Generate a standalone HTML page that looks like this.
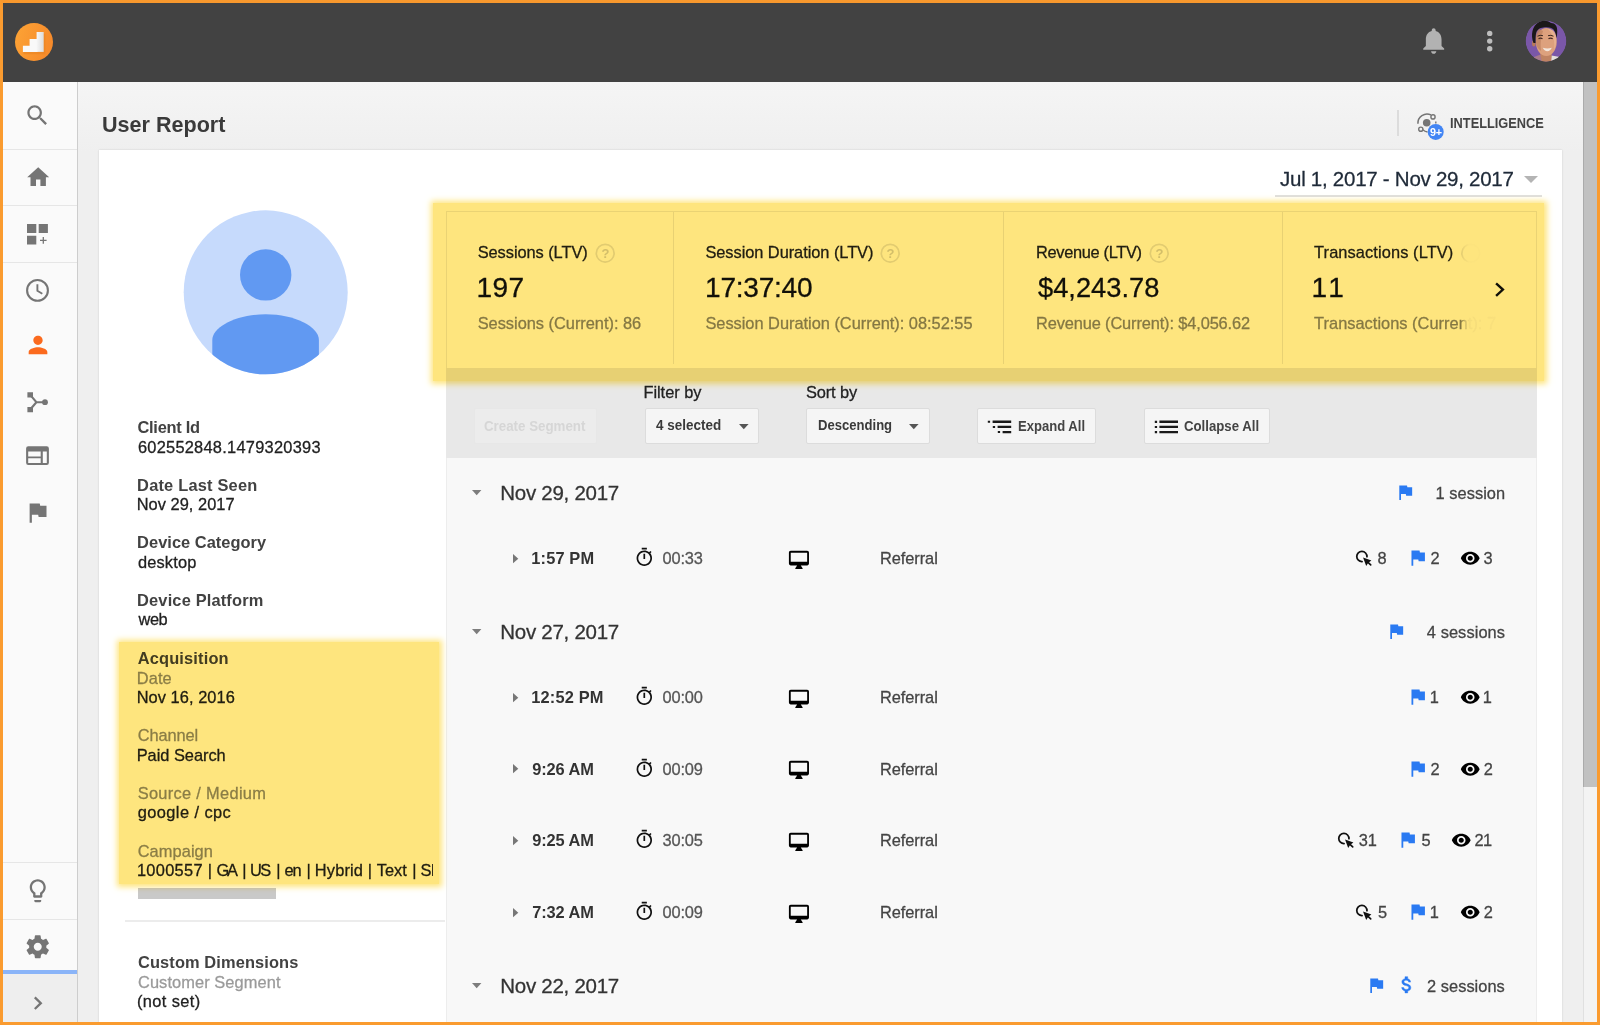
<!DOCTYPE html>
<html>
<head>
<meta charset="utf-8">
<title>User Report</title>
<style>
*{box-sizing:border-box;margin:0;padding:0}
html,body{width:1600px;height:1025px;overflow:hidden;background:#f1f1f1;font-family:"Liberation Sans",sans-serif;color:#212121}
#app{position:absolute;left:0;top:0;width:1600px;height:1025px;overflow:hidden}
#frame{position:absolute;left:0;top:0;width:1600px;height:1025px;border:3px solid #fa9b2f;border-top-color:#f8982d;z-index:50}
.a{position:absolute}
.t{position:absolute;white-space:nowrap;line-height:1;height:1em}
.t{-webkit-text-stroke:.28px}
.b{font-weight:bold;-webkit-text-stroke:0}
svg{position:absolute;overflow:visible}
#topbar{left:0;top:0;width:1600px;height:82px;background:#424242}
#side{left:0;top:82px;width:78px;height:943px;background:#fafafa;border-right:1px solid #cdcdcd}
.ln{position:absolute;left:0;width:77px;height:1px;background:#e6e6e6}
#main{left:78px;top:82px;width:1505px;height:943px;background:linear-gradient(#f5f5f5,#efefef 70px,#efefef)}
#card{left:99px;top:150px;width:1463px;height:880px;background:#fff;box-shadow:0 0 2px rgba(0,0,0,.14)}
#sbtrack{left:1583px;top:82px;width:14px;height:943px;background:#f3f3f3;border-left:1px solid #e0e0e0}
#sbthumb{left:1583px;top:82px;width:14px;height:705px;background:#c1c1c1;border-left:1px solid #ababab}
#stats{left:446px;top:211px;width:1091px;height:157px;background:#fff;border:1px solid #ebebeb;border-bottom:none}
.vd{position:absolute;top:212px;width:1px;height:152px;background:#e9e9e9}
#tool{left:446px;top:368px;width:1091px;height:90px;background:#e8e8e8}
#tl{left:446px;top:458px;width:1091px;height:580px;background:#f8f8f8;border-left:1px solid #ededed;border-right:1px solid #ededed}
.btn{position:absolute;top:408px;height:36px;background:#f5f5f5;border:1px solid #dcdcdc;border-radius:2px}
.hl{position:absolute;background:#fee57e;mix-blend-mode:multiply;box-shadow:0 0 6px 2.5px #fee57e;z-index:20}
</style>
</head>
<body>
<div id="app">
<div id="main" class="a"></div>
<div id="card" class="a"></div>
<div id="side" class="a">
<div class="ln" style="top:67px"></div>
<div class="ln" style="top:123px"></div>
<div class="ln" style="top:180px"></div>
<div class="ln" style="top:780px"></div>
<div class="ln" style="top:837px"></div>
<div class="a" style="left:0;top:891px;width:77px;height:52px;background:#eee"></div>
<div class="a" style="left:0;top:888px;width:77px;height:4px;background:#8ab4f8"></div>
</div>
<div id="topbar" class="a"></div>
<div id="sbtrack" class="a"></div>
<div id="sbthumb" class="a"></div>
<!-- header -->
<div class="a" style="left:1397px;top:110px;width:2px;height:26px;background:#dcdcdc"></div>
<div class="a" style="left:1275px;top:195px;width:267px;height:1.5px;background:#e0e0e0"></div>
<!-- left panel -->
<div class="a" style="left:125px;top:920px;width:320px;height:2px;background:#ececec"></div>
<div class="a" style="left:138px;top:888px;width:138px;height:11px;background:#c9c9c9"></div>
<!-- stats / toolbar / timeline -->
<div id="tl" class="a"></div>
<div id="tool" class="a"></div>
<div id="stats" class="a"></div>
<div class="vd" style="left:673px"></div>
<div class="vd" style="left:1003px"></div>
<div class="vd" style="left:1282px"></div>
<div class="btn" style="left:473.5px;width:123px;background:#ececec;border-color:#e7e7e7"></div>
<div class="btn" style="left:644.5px;width:114px"></div>
<div class="btn" style="left:806px;width:124px"></div>
<div class="btn" style="left:977px;width:119px"></div>
<div class="btn" style="left:1144px;width:125.5px"></div>
<svg width="0" height="0" style="left:0;top:0"><defs>
<linearGradient id="gaG" x1="0" y1="0" x2="1" y2="0.3"><stop offset="0" stop-color="#fda436"/><stop offset="1" stop-color="#f68b2b"/></linearGradient>
<linearGradient id="gaS" x1="0" y1="0" x2="1" y2="0"><stop offset="0" stop-color="#f7f7f7"/><stop offset="1" stop-color="#dcdcdc"/></linearGradient>
<clipPath id="avc"><circle cx="0" cy="0" r="20.4"/></clipPath>
<clipPath id="usc"><circle cx="265.7" cy="292.3" r="82"/></clipPath>
</defs></svg>
<!-- GA logo -->
<svg class="a" style="left:15px;top:23.2px" width="38" height="38" viewBox="0 0 38 38"><circle cx="19" cy="19" r="19" fill="url(#gaG)"/><path d="M7.9 30.3v-6.7h6.7v-6.7h8v-7.1h7.1v20.5z" fill="#e88423" opacity=".55" transform="translate(.6 .9)"/><path d="M7.9 28.9v-6.1h6.7v-6.7h8v12.8z" fill="#f9f9f9"/><path d="M21.6 28.9V9.0h7.1v19.9z" fill="url(#gaS)"/></svg>
<!-- bell -->
<svg class="a" style="left:1417.6px;top:25.1px" width="31.4" height="31.4" viewBox="0 0 24 24"><path fill="#b2b2b2" d="M12 22c1.1 0 2-.9 2-2h-4c0 1.1.89 2 2 2zm6-6v-5c0-3.07-1.64-5.64-4.5-6.32V4c0-.83-.67-1.5-1.5-1.5s-1.5.67-1.5 1.5v.68C7.63 5.36 6 7.92 6 11v5l-2 2v1h16v-1l-2-2z"/></svg>
<!-- dots -->
<svg class="a" style="left:1480px;top:25px" width="20" height="32"><circle cx="9.7" cy="8.4" r="2.7" fill="#bdbdbd"/><circle cx="9.7" cy="16.1" r="2.7" fill="#bdbdbd"/><circle cx="9.7" cy="23.8" r="2.7" fill="#bdbdbd"/></svg>
<!-- avatar -->
<svg class="a" style="left:1546.1px;top:41.3px" width="1" height="1"><g clip-path="url(#avc)"><circle r="20.4" fill="#7a57a8"/><path d="M-14 21l2-5 8-3h9l3 8z" fill="#a87a8c"/><path d="M5.500 14.500l8.500 1.500-2 6h-7z" fill="#e3e1dc"/><path d="M-6.500 9h12.500l-1 12.500h-9z" fill="#c08362"/><ellipse cx="0.300" cy="1" rx="10.400" ry="14" fill="#dda17d"/><path d="M-10 2c-1-6 0-11 3-14l4 2c-2 6-3 12-2 20-3-2-4.500-5-5-8z" fill="#c18463" opacity=".8"/><path d="M2-12c4 0 7 2 8 6 1 5 0 11-2 15 1-8 0-15-6-21z" fill="#ecb896" opacity=".7"/><ellipse cx="-12.200" cy="2.500" rx="1.800" ry="3" fill="#b87a58"/><path d="M-12.500 2C-15.500-6-14-15-7-19c4-2 9-1.500 12 1 4 0 6.500 3 6.200 8 0 2.500-.2 5-.7 7-.5-3-1-6-3-8.500-2-2-6-2.500-10-2-4 .5-6.500 2-7.500 6-.5 3-.5 6-.5 9.500z" fill="#1b1819"/><path d="M-3.200 6.800q4.500 1.400 9 0q-1.500 3.400-4.500 3.400t-4.500-3.400z" fill="#f3e6dc"/><path d="M-7.500-2.300q2-1.200 4 0M2.500-2.300q2-1.200 4.200 0" stroke="#4a2e26" stroke-width="1.300" fill="none"/><path d="M-8.500-4.800q2.500-1.500 5.500-.5M2-5.300q3-1 5.500.5" stroke="#2a1c1a" stroke-width=".9" fill="none"/></g></svg>
<!-- sidebar: search -->
<svg class="a" style="left:23.6px;top:101.8px" width="26.9" height="26.9" viewBox="0 0 24 24"><path fill="#757575" d="M15.5 14h-.79l-.28-.27C15.41 12.59 16 11.11 16 9.500 16 5.910 13.090 3 9.500 3S3 5.910 3 9.500 5.910 16 9.500 16c1.610 0 3.090-.59 4.230-1.570l.27.28v.79l5 4.990L20.490 19l-4.990-5zm-6 0C7.010 14 5 11.990 5 9.500S7.010 5 9.500 5 14 7.010 14 9.500 11.990 14 9.500 14z"/></svg>
<!-- home -->
<svg class="a" style="left:24.5px;top:163.6px" width="26.4" height="26.4" viewBox="0 0 24 24"><path fill="#757575" d="M10 20v-6h4v6h5v-8h3L12 3 2 12h3v8z"/></svg>
<!-- dashboards -->
<svg class="a" style="left:27.4px;top:224.4px" width="21" height="21"><path fill="#757575" d="M0 0h9.300v8.900H0zM11.700 0h9.200v8.900h-9.200zM0 11.700h9.300v8.900H0z"/><path d="M13 16.400h6.600M16.300 13.100v6.600" stroke="#757575" stroke-width="1.300" fill="none"/></svg>
<!-- clock -->
<svg class="a" style="left:24px;top:277px" width="27" height="27"><circle cx="13.500" cy="13.400" r="10.400" fill="none" stroke="#757575" stroke-width="2.100"/><path d="M13.400 7.300v6.500l4.900 2.900" fill="none" stroke="#757575" stroke-width="1.900"/></svg>
<!-- person (active) -->
<svg class="a" style="left:23.500px;top:331.400px" width="28" height="28" viewBox="0 0 24 24"><path fill="#fb6a1e" d="M12 12c2.210 0 4-1.790 4-4s-1.790-4-4-4-4 1.790-4 4 1.790 4 4 4zm0 2c-2.670 0-8 1.340-8 4v2h16v-2c0-2.660-5.330-4-8-4z"/></svg>
<!-- merge / flow -->
<svg class="a" style="left:26px;top:390px" width="24" height="24"><path d="M4.200 4.900L10.400 12.200H17M4.200 19.500L10.400 12.200" fill="none" stroke="#757575" stroke-width="2.100"/><path fill="#757575" d="M1.400 2.300h5.600v5.300H1.400zM1.400 16.900h5.600v5.300H1.400z"/><circle cx="19" cy="12.200" r="2.900" fill="#757575"/></svg>
<!-- table -->
<svg class="a" style="left:26px;top:446px" width="24" height="20"><path fill="#757575" fill-rule="evenodd" d="M2.300.3h18.400a2.200 2.200 0 0 1 2.200 2.200v14.200a2.200 2.200 0 0 1-2.200 2.200H2.300A2.200 2.200 0 0 1 .1 16.700V2.500A2.200 2.200 0 0 1 2.300.3zM2.200 5.600v4.800h12.500V5.600zM2.200 12.300v4.600h12.500v-4.600zM16.800 5.600v11.300h4V5.600z"/></svg>
<!-- flag -->
<svg class="a" style="left:24.200px;top:498.500px" width="27" height="27" viewBox="0 0 24 24" fill="#757575"><path d="M14.4 6L14 4H5v17h2v-7h5.6l.4 2h7V6z"/></svg>
<!-- bulb -->
<svg class="a" style="left:24px;top:877px" width="27.500" height="27.500" viewBox="0 0 24 24"><path fill="#757575" d="M9 21c0 .55.450 1 1 1h4c.55 0 1-.45 1-1v-1H9v1zm3-19C8.140 2 5 5.140 5 9c0 2.380 1.190 4.470 3 5.740V17c0 .55.450 1 1 1h6c.55 0 1-.45 1-1v-2.260c1.810-1.270 3-3.360 3-5.740 0-3.860-3.140-7-7-7zm2.850 11.100l-.85.6V16h-4v-2.300l-.85-.6C7.800 12.160 7 10.630 7 9c0-2.760 2.240-5 5-5s5 2.240 5 5c0 1.630-.8 3.160-2.150 4.100z"/></svg>
<!-- gear -->
<svg class="a" style="left:23.900px;top:933.200px" width="27.500" height="27.500" viewBox="0 0 24 24"><path fill="#757575" d="M19.430 12.980c.04-.32.070-.64.070-.98s-.03-.66-.07-.98l2.110-1.650c.19-.15.240-.42.120-.64l-2-3.460c-.12-.22-.39-.3-.61-.22l-2.490 1c-.52-.4-1.080-.73-1.690-.98l-.38-2.650C14.460 2.180 14.250 2 14 2h-4c-.25 0-.46.180-.49.420l-.38 2.650c-.61.250-1.170.59-1.690.98l-2.490-1c-.23-.09-.49 0-.61.220l-2 3.460c-.13.220-.07.490.12.640l2.110 1.650c-.04.320-.07.650-.07.980s.03.660.07.980l-2.110 1.650c-.19.150-.24.420-.12.640l2 3.460c.12.220.39.300.61.220l2.490-1c.52.400 1.080.73 1.690.98l.38 2.650c.03.240.24.420.49.420h4c.25 0 .46-.18.490-.42l.38-2.650c.61-.25 1.170-.59 1.690-.98l2.490 1c.23.090.49 0 .61-.22l2-3.460c.12-.22.070-.49-.12-.64l-2.110-1.650zM12 15.500c-1.930 0-3.500-1.570-3.500-3.500s1.570-3.500 3.500-3.500 3.500 1.570 3.500 3.500-1.570 3.500-3.500 3.500z"/></svg>
<!-- sidebar chevron -->
<svg class="a" style="left:30px;top:994px" width="16" height="18"><path d="M4.800 3.400L10.800 9.200 4.800 15" fill="none" stroke="#757575" stroke-width="2.300"/></svg>
<!-- user avatar big -->
<svg class="a" style="left:0;top:0" width="1" height="1"><circle cx="265.700" cy="292.300" r="82" fill="#c6dafc"/><circle cx="265.700" cy="274.900" r="25.700" fill="#6199f2"/><g clip-path="url(#usc)"><path d="M212.300 380V340c0-13 24-25.700 53.400-25.700s53.200 12.700 53.200 25.700v40z" fill="#6199f2"/></g></svg>
<!-- intelligence icon -->
<svg class="a" style="left:1414px;top:110px" width="32" height="32"><circle cx="12.700" cy="12.800" r="3.800" fill="#757575"/><path d="M3.900 13.800A9.200 9.200 0 0 1 17 4.900M8.800 19.700A9.200 9.200 0 0 0 13.500 22" fill="none" stroke="#757575" stroke-width="1.500"/><circle cx="19" cy="6.900" r="2.100" fill="#f1f1f1" stroke="#757575" stroke-width="1.400"/><circle cx="6.800" cy="19.200" r="2.100" fill="#f1f1f1" stroke="#757575" stroke-width="1.400"/><path d="M21.800 11.500v2" stroke="#757575" stroke-width="1.400"/><circle cx="21.700" cy="21.900" r="8" fill="#4285f4"/></svg>
<div class="t b" style="left:1429.900px;top:126.600px;font-size:10.800px;color:#fff;letter-spacing:-.2px">9+</div>
<!-- date caret -->
<svg class="a" style="left:1524.400px;top:176px" width="14" height="7"><path d="M0 0h14l-7 7z" fill="#b4b4b4"/></svg>
<!-- dropdown carets -->
<svg class="a" style="left:738.600px;top:424.300px" width="10" height="6"><path d="M0 0h9.600l-4.800 5.300z" fill="#555"/></svg>
<svg class="a" style="left:909px;top:424.300px" width="10" height="6"><path d="M0 0h9.600l-4.800 5.300z" fill="#555"/></svg>
<!-- expand all icon -->
<svg class="a" style="left:987px;top:420px" width="26" height="15"><path fill="#1a1a1a" d="M.8 .8h2.300v2H.8zM5.600 .6h18.600v2.300H5.600zM5.800 5.900h2.300v2H5.800zM10.600 5.700h13.600v2.300H10.600zM10.800 11.100h2.300v2h-2.300zM15.600 10.900h8.600v2.300h-8.600z"/></svg>
<!-- collapse all icon -->
<svg class="a" style="left:1154px;top:420px" width="26" height="15"><path fill="#1a1a1a" d="M.8 .8h2.300v2.100H.8zM5.400 .6h18.600v2.400H5.400zM.8 5.900h2.300v2.100H.8zM5.400 5.700h18.600v2.400H5.400zM.8 11.100h2.300v2.100H.8zM5.400 10.900h18.600v2.400H5.400z"/></svg>
<svg class="a" style="left:0;top:0" width="1" height="1"><circle cx="1470.800" cy="253.200" r="8.900" fill="none" stroke="#e3e3e3" stroke-width="1.700"/></svg>

<div class="t b" style="left:102.34px;top:114.00px;font-size:22.55px;color:#3a3a3a;transform:scaleX(0.9561);transform-origin:0 0">User Report</div>
<div class="t b" style="left:1449.50px;top:117.00px;font-size:13.84px;color:#444;transform:scaleX(0.9260);transform-origin:0 0">INTELLIGENCE</div>
<div class="t" style="left:1280.00px;top:169.00px;font-size:20.5px;color:#1f2a38;letter-spacing:-0.263px">Jul 1, 2017 - Nov 29, 2017</div>
<div class="t b" style="left:137.50px;top:419.00px;font-size:16.4px;color:#424242;letter-spacing:-0.267px">Client Id</div>
<div class="t" style="left:137.90px;top:439.00px;font-size:16.4px;color:#212121;letter-spacing:0.256px">602552848.1479320393</div>
<div class="t b" style="left:137.10px;top:477.00px;font-size:16.4px;color:#424242;letter-spacing:0.200px">Date Last Seen</div>
<div class="t" style="left:136.70px;top:496.00px;font-size:16.4px;color:#212121;letter-spacing:0.037px">Nov 29, 2017</div>
<div class="t b" style="left:137.10px;top:534.00px;font-size:16.4px;color:#424242;letter-spacing:0.040px">Device Category</div>
<div class="t" style="left:137.90px;top:554.00px;font-size:16.4px;color:#212121;letter-spacing:0.185px">desktop</div>
<div class="t b" style="left:137.10px;top:592.00px;font-size:16.4px;color:#424242;letter-spacing:0.163px">Device Platform</div>
<div class="t" style="left:138.50px;top:611.00px;font-size:16.4px;color:#212121;letter-spacing:-0.426px">web</div>
<div class="t b" style="left:137.70px;top:650.00px;font-size:16.4px;color:#424242;letter-spacing:0.168px">Acquisition</div>
<div class="t" style="left:136.70px;top:670.00px;font-size:16.4px;color:#8b8b8b;letter-spacing:0.131px">Date</div>
<div class="t" style="left:136.70px;top:689.00px;font-size:16.4px;color:#212121;letter-spacing:0.056px">Nov 16, 2016</div>
<div class="t" style="left:137.70px;top:727.00px;font-size:16.4px;color:#8b8b8b;letter-spacing:-0.103px">Channel</div>
<div class="t" style="left:136.70px;top:747.00px;font-size:16.4px;color:#212121;letter-spacing:-0.028px">Paid Search</div>
<div class="t" style="left:137.70px;top:785.00px;font-size:16.4px;color:#8b8b8b;letter-spacing:0.312px">Source / Medium</div>
<div class="t" style="left:137.70px;top:804.00px;font-size:16.4px;color:#212121;letter-spacing:0.428px">google / cpc</div>
<div class="t" style="left:137.70px;top:843.00px;font-size:16.4px;color:#8b8b8b;letter-spacing:0.072px">Campaign</div>
<div class="t b" style="left:138.00px;top:954.00px;font-size:16.4px;color:#424242;letter-spacing:0.116px">Custom Dimensions</div>
<div class="t" style="left:138.00px;top:974.00px;font-size:16.4px;color:#9a9a9a;letter-spacing:0.084px">Customer Segment</div>
<div class="t" style="left:137.00px;top:993.00px;font-size:16.4px;color:#212121;letter-spacing:0.392px">(not set)</div>
<div class="t" style="left:477.70px;top:244.00px;font-size:16.4px;color:#212121;letter-spacing:-0.059px">Sessions (LTV)</div>
<div class="t" style="left:476.60px;top:274.00px;font-size:28.08px;color:#111;letter-spacing:0.334px">197</div>
<div class="t" style="left:477.70px;top:315.00px;font-size:16.4px;color:#868686;letter-spacing:-0.022px">Sessions (Current): 86</div>
<div class="t" style="left:705.40px;top:244.00px;font-size:16.4px;color:#212121;letter-spacing:-0.051px">Session Duration (LTV)</div>
<div class="t" style="left:705.00px;top:274.00px;font-size:28.08px;color:#111;letter-spacing:-0.240px">17:37:40</div>
<div class="t" style="left:705.40px;top:315.00px;font-size:16.4px;color:#868686;letter-spacing:-0.021px">Session Duration (Current): 08:52:55</div>
<div class="t" style="left:1036.00px;top:244.00px;font-size:16.4px;color:#212121;letter-spacing:-0.322px">Revenue (LTV)</div>
<div class="t" style="left:1037.60px;top:274.00px;font-size:28.08px;color:#111;transform:scaleX(0.9719);transform-origin:0 0">$4,243.78</div>
<div class="t" style="left:1036.00px;top:315.00px;font-size:16.4px;color:#868686;letter-spacing:-0.135px">Revenue (Current): $4,056.62</div>
<div class="t" style="left:1314.10px;top:244.00px;font-size:16.4px;color:#212121;letter-spacing:0.096px">Transactions (LTV)</div>
<div class="t" style="left:1311.45px;top:274.00px;font-size:28.08px;color:#111">1</div>
<div class="t" style="left:1328.35px;top:274.00px;font-size:28.08px;color:#111">1</div>
<div class="t" style="left:1314.10px;top:315.00px;font-size:16.4px;color:#868686;letter-spacing:0.019px">Transactions (Current): 7</div>
<div class="t" style="left:643.40px;top:384.00px;font-size:16.4px;color:#212121;letter-spacing:-0.024px">Filter by</div>
<div class="t" style="left:806.00px;top:384.00px;font-size:16.4px;color:#212121;letter-spacing:-0.138px">Sort by</div>
<div class="t b" style="left:484.10px;top:419.00px;font-size:14.35px;color:#d6d6d6;transform:scaleX(0.9284);transform-origin:0 0">Create Segment</div>
<div class="t b" style="left:656.00px;top:418.00px;font-size:14.35px;color:#3a3a3a;transform:scaleX(0.9386);transform-origin:0 0">4 selected</div>
<div class="t b" style="left:817.90px;top:418.00px;font-size:14.35px;color:#3a3a3a;transform:scaleX(0.9114);transform-origin:0 0">Descending</div>
<div class="t b" style="left:1017.80px;top:419.00px;font-size:14.35px;color:#444;transform:scaleX(0.9106);transform-origin:0 0">Expand All</div>
<div class="t b" style="left:1183.80px;top:419.00px;font-size:14.35px;color:#444;transform:scaleX(0.9209);transform-origin:0 0">Collapse All</div>
<div class="t" style="left:500.30px;top:483.00px;font-size:20.5px;color:#333;letter-spacing:-0.277px">Nov 29, 2017</div>
<div class="t" style="left:1435.50px;top:485.00px;font-size:16.4px;color:#444;letter-spacing:0.046px">1 session</div>
<div class="t" style="left:500.30px;top:622.00px;font-size:20.5px;color:#333;letter-spacing:-0.277px">Nov 27, 2017</div>
<div class="t" style="left:1426.80px;top:624.00px;font-size:16.4px;color:#444;letter-spacing:0.084px">4 sessions</div>
<div class="t" style="left:500.30px;top:976.00px;font-size:20.5px;color:#333;letter-spacing:-0.277px">Nov 22, 2017</div>
<div class="t" style="left:1427.00px;top:978.00px;font-size:16.4px;color:#444;letter-spacing:0.040px">2 sessions</div>
<div class="t" style="left:136.90px;top:862.00px;font-size:16.4px;color:#212121;letter-spacing:0.301px">1000557</div>
<div class="t" style="left:207.85px;top:862.00px;font-size:16.4px;color:#212121">|</div>
<div class="t" style="left:216.60px;top:862.00px;font-size:16.4px;color:#212121;letter-spacing:-2.449px">GA</div>
<div class="t" style="left:242.25px;top:862.00px;font-size:16.4px;color:#212121">|</div>
<div class="t" style="left:250.00px;top:862.00px;font-size:16.4px;color:#212121;letter-spacing:-1.537px">US</div>
<div class="t" style="left:276.15px;top:862.00px;font-size:16.4px;color:#212121">|</div>
<div class="t" style="left:284.60px;top:862.00px;font-size:16.4px;color:#212121;letter-spacing:-1.116px">en</div>
<div class="t" style="left:306.45px;top:862.00px;font-size:16.4px;color:#212121">|</div>
<div class="t" style="left:314.80px;top:862.00px;font-size:16.4px;color:#212121;letter-spacing:0.151px">Hybrid</div>
<div class="t" style="left:367.65px;top:862.00px;font-size:16.4px;color:#212121">|</div>
<div class="t" style="left:376.70px;top:862.00px;font-size:16.4px;color:#212121;letter-spacing:0.032px">Text</div>
<div class="t" style="left:412.15px;top:862.00px;font-size:16.4px;color:#212121">|</div>
<div class="t" style="left:420.45px;top:862.00px;font-size:16.4px;color:#212121">S</div>
<div class="t b" style="left:531.30px;top:550.00px;font-size:16.4px;color:#333;letter-spacing:0.135px">1:57 PM</div>
<div class="t" style="left:662.50px;top:550.00px;font-size:16.4px;color:#555;letter-spacing:-0.150px">00:33</div>
<div class="t" style="left:879.90px;top:550.00px;font-size:16.4px;color:#444;letter-spacing:-0.051px">Referral</div>
<div class="t" style="left:1377.55px;top:550.00px;font-size:16.4px;color:#444">8</div>
<div class="t" style="left:1430.50px;top:550.00px;font-size:16.4px;color:#444">2</div>
<div class="t" style="left:1483.55px;top:550.00px;font-size:16.4px;color:#444">3</div>
<div class="t b" style="left:531.30px;top:689.00px;font-size:16.4px;color:#333;letter-spacing:0.156px">12:52 PM</div>
<div class="t" style="left:662.50px;top:689.00px;font-size:16.4px;color:#555;letter-spacing:-0.150px">00:00</div>
<div class="t" style="left:879.90px;top:689.00px;font-size:16.4px;color:#444;letter-spacing:-0.051px">Referral</div>
<div class="t" style="left:1429.65px;top:689.00px;font-size:16.4px;color:#444">1</div>
<div class="t" style="left:1482.65px;top:689.00px;font-size:16.4px;color:#444">1</div>
<div class="t b" style="left:532.30px;top:761.00px;font-size:16.4px;color:#333;letter-spacing:-0.124px">9:26 AM</div>
<div class="t" style="left:662.50px;top:761.00px;font-size:16.4px;color:#555;letter-spacing:-0.150px">00:09</div>
<div class="t" style="left:879.90px;top:761.00px;font-size:16.4px;color:#444;letter-spacing:-0.051px">Referral</div>
<div class="t" style="left:1430.50px;top:761.00px;font-size:16.4px;color:#444">2</div>
<div class="t" style="left:1483.65px;top:761.00px;font-size:16.4px;color:#444">2</div>
<div class="t b" style="left:532.30px;top:832.00px;font-size:16.4px;color:#333;letter-spacing:-0.124px">9:25 AM</div>
<div class="t" style="left:662.50px;top:832.00px;font-size:16.4px;color:#555;letter-spacing:-0.150px">30:05</div>
<div class="t" style="left:879.90px;top:832.00px;font-size:16.4px;color:#444;letter-spacing:-0.051px">Referral</div>
<div class="t" style="left:1358.70px;top:832.00px;font-size:16.4px;color:#444">3</div>
<div class="t" style="left:1367.65px;top:832.00px;font-size:16.4px;color:#444">1</div>
<div class="t" style="left:1421.40px;top:832.00px;font-size:16.4px;color:#444">5</div>
<div class="t" style="left:1474.50px;top:832.00px;font-size:16.4px;color:#444">2</div>
<div class="t" style="left:1482.95px;top:832.00px;font-size:16.4px;color:#444">1</div>
<div class="t b" style="left:532.30px;top:904.00px;font-size:16.4px;color:#333;letter-spacing:-0.124px">7:32 AM</div>
<div class="t" style="left:662.50px;top:904.00px;font-size:16.4px;color:#555;letter-spacing:-0.150px">00:09</div>
<div class="t" style="left:879.90px;top:904.00px;font-size:16.4px;color:#444;letter-spacing:-0.051px">Referral</div>
<div class="t" style="left:1378.00px;top:904.00px;font-size:16.4px;color:#444">5</div>
<div class="t" style="left:1429.65px;top:904.00px;font-size:16.4px;color:#444">1</div>
<div class="t" style="left:1483.70px;top:904.00px;font-size:16.4px;color:#444">2</div>
<svg class="a" style="left:471.9px;top:490.20px" width="10" height="6"><path d="M0 0h9.400l-4.700 5.300z" fill="#7d7d7d"/></svg>
<svg class="a" style="left:471.9px;top:629.00px" width="10" height="6"><path d="M0 0h9.400l-4.700 5.300z" fill="#7d7d7d"/></svg>
<svg class="a" style="left:471.9px;top:983.00px" width="10" height="6"><path d="M0 0h9.400l-4.700 5.300z" fill="#7d7d7d"/></svg>
<svg class="a" style="left:1394.81px;top:482.00px" width="20.6" height="20.6" viewBox="0 0 24 24" fill="#2a7af2"><path d="M14.4 6L14 4H5v17h2v-7h5.6l.4 2h7V6z"/></svg>
<svg class="a" style="left:1386.01px;top:620.80px" width="20.6" height="20.6" viewBox="0 0 24 24" fill="#2a7af2"><path d="M14.4 6L14 4H5v17h2v-7h5.6l.4 2h7V6z"/></svg>
<svg class="a" style="left:1366.41px;top:974.80px" width="20.6" height="20.6" viewBox="0 0 24 24" fill="#2a7af2"><path d="M14.4 6L14 4H5v17h2v-7h5.6l.4 2h7V6z"/></svg>
<svg class="a" style="left:1395.5px;top:974.3px" width="21.6" height="21.6" viewBox="0 0 24 24"><path fill="#2a7af2" stroke="#2a7af2" stroke-width=".5" d="M11.8 10.9c-2.27-.59-3-1.2-3-2.15 0-1.09 1.01-1.85 2.7-1.85 1.78 0 2.44.85 2.5 2.1h2.21c-.07-1.72-1.12-3.3-3.21-3.81V3h-3v2.16c-1.94.42-3.5 1.68-3.5 3.61 0 2.31 1.91 3.46 4.7 4.13 2.5.6 3 1.48 3 2.41 0 .69-.49 1.79-2.7 1.79-2.06 0-2.87-.92-2.98-2.1h-2.2c.12 2.19 1.76 3.42 3.68 3.83V21h3v-2.150c1.950-.37 3.500-1.500 3.500-3.550 0-2.840-2.430-3.810-4.700-4.400z"/></svg>
<svg class="a" style="left:513.1px;top:553.80px" width="6" height="10"><path d="M0 0l5.300 4.650L0 9.300z" fill="#777"/></svg>
<svg class="a" style="left:633.7px;top:547.25px" width="20.6" height="20.6" viewBox="0 0 24 24" fill="#111"><path d="M15 1H9v2h6V1zm-4 13h2V8h-2v6zm8.03-6.61l1.42-1.42c-.43-.51-.9-.99-1.41-1.41l-1.42 1.42C16.07 4.74 14.12 4 12 4c-4.97 0-9 4.03-9 9s4.02 9 9 9 9-4.03 9-9c0-2.12-.74-4.07-1.97-5.61zM12 20c-3.87 0-7-3.13-7-7s3.13-7 7-7 7 3.13 7 7-3.13 7-7 7z"/></svg>
<svg class="a" style="left:787.85px;top:548.80px" width="21.9" height="21.9" viewBox="0 0 24 24" fill="#000"><path d="M21 2H3c-1.1 0-2 .9-2 2v12c0 1.1.9 2 2 2h7l-2 3v1h8v-1l-2-3h7c1.1 0 2-.9 2-2V4c0-1.1-.9-2-2-2zm0 12H3V4h18v10z"/></svg>
<svg class="a" style="left:1356.20px;top:549.80px" width="16" height="16" viewBox="0 0 16 16"><path d="M10.97 6.7A5.1 5.1 0 1 0 6.07 11.6" fill="none" stroke="#111" stroke-width="1.75" stroke-linecap="round"/><path d="M7.04 7.44L15.4 10.6 12.3 12.7 10.2 15.9z" fill="#111"/><path d="M12.3 12.7L14.7 14.9" stroke="#111" stroke-width="1.7" stroke-linecap="round"/></svg>
<svg class="a" style="left:1407.02px;top:547.20px" width="21.5" height="21.5" viewBox="0 0 24 24" fill="#2a7af2"><path d="M14.4 6L14 4H5v17h2v-7h5.6l.4 2h7V6z"/></svg>
<svg class="a" style="left:1460.45px;top:548.00px" width="20.5" height="20.5" viewBox="0 0 24 24" fill="#000"><path d="M12 4.5C7 4.5 2.73 7.61 1 12c1.73 4.39 6 7.5 11 7.5s9.27-3.11 11-7.5c-1.73-4.39-6-7.5-11-7.5zM12 17c-2.76 0-5-2.24-5-5s2.24-5 5-5 5 2.24 5 5-2.24 5-5 5zm0-8c-1.66 0-3 1.34-3 3s1.34 3 3 3 3-1.34 3-3-1.34-3-3-3z"/></svg>
<svg class="a" style="left:513.1px;top:692.50px" width="6" height="10"><path d="M0 0l5.300 4.650L0 9.300z" fill="#777"/></svg>
<svg class="a" style="left:633.7px;top:685.95px" width="20.6" height="20.6" viewBox="0 0 24 24" fill="#111"><path d="M15 1H9v2h6V1zm-4 13h2V8h-2v6zm8.03-6.61l1.42-1.42c-.43-.51-.9-.99-1.41-1.41l-1.42 1.42C16.07 4.74 14.12 4 12 4c-4.97 0-9 4.03-9 9s4.02 9 9 9 9-4.03 9-9c0-2.12-.74-4.07-1.97-5.61zM12 20c-3.87 0-7-3.13-7-7s3.13-7 7-7 7 3.13 7 7-3.13 7-7 7z"/></svg>
<svg class="a" style="left:787.85px;top:687.50px" width="21.9" height="21.9" viewBox="0 0 24 24" fill="#000"><path d="M21 2H3c-1.1 0-2 .9-2 2v12c0 1.1.9 2 2 2h7l-2 3v1h8v-1l-2-3h7c1.1 0 2-.9 2-2V4c0-1.1-.9-2-2-2zm0 12H3V4h18v10z"/></svg>
<svg class="a" style="left:1407.02px;top:685.90px" width="21.5" height="21.5" viewBox="0 0 24 24" fill="#2a7af2"><path d="M14.4 6L14 4H5v17h2v-7h5.6l.4 2h7V6z"/></svg>
<svg class="a" style="left:1460.45px;top:686.70px" width="20.5" height="20.5" viewBox="0 0 24 24" fill="#000"><path d="M12 4.5C7 4.5 2.73 7.61 1 12c1.73 4.39 6 7.5 11 7.5s9.27-3.11 11-7.5c-1.73-4.39-6-7.5-11-7.5zM12 17c-2.76 0-5-2.24-5-5s2.24-5 5-5 5 2.24 5 5-2.24 5-5 5zm0-8c-1.66 0-3 1.34-3 3s1.34 3 3 3 3-1.34 3-3-1.34-3-3-3z"/></svg>
<svg class="a" style="left:513.1px;top:764.30px" width="6" height="10"><path d="M0 0l5.300 4.650L0 9.300z" fill="#777"/></svg>
<svg class="a" style="left:633.7px;top:757.75px" width="20.6" height="20.6" viewBox="0 0 24 24" fill="#111"><path d="M15 1H9v2h6V1zm-4 13h2V8h-2v6zm8.03-6.61l1.42-1.42c-.43-.51-.9-.99-1.41-1.41l-1.42 1.42C16.07 4.74 14.12 4 12 4c-4.97 0-9 4.03-9 9s4.02 9 9 9 9-4.03 9-9c0-2.12-.74-4.07-1.97-5.61zM12 20c-3.87 0-7-3.13-7-7s3.13-7 7-7 7 3.13 7 7-3.13 7-7 7z"/></svg>
<svg class="a" style="left:787.85px;top:759.30px" width="21.9" height="21.9" viewBox="0 0 24 24" fill="#000"><path d="M21 2H3c-1.1 0-2 .9-2 2v12c0 1.1.9 2 2 2h7l-2 3v1h8v-1l-2-3h7c1.1 0 2-.9 2-2V4c0-1.1-.9-2-2-2zm0 12H3V4h18v10z"/></svg>
<svg class="a" style="left:1407.02px;top:757.70px" width="21.5" height="21.5" viewBox="0 0 24 24" fill="#2a7af2"><path d="M14.4 6L14 4H5v17h2v-7h5.6l.4 2h7V6z"/></svg>
<svg class="a" style="left:1460.45px;top:758.50px" width="20.5" height="20.5" viewBox="0 0 24 24" fill="#000"><path d="M12 4.5C7 4.5 2.73 7.61 1 12c1.73 4.39 6 7.5 11 7.5s9.27-3.11 11-7.5c-1.73-4.39-6-7.5-11-7.5zM12 17c-2.76 0-5-2.24-5-5s2.24-5 5-5 5 2.24 5 5-2.24 5-5 5zm0-8c-1.66 0-3 1.34-3 3s1.34 3 3 3 3-1.34 3-3-1.34-3-3-3z"/></svg>
<svg class="a" style="left:513.1px;top:835.90px" width="6" height="10"><path d="M0 0l5.300 4.650L0 9.300z" fill="#777"/></svg>
<svg class="a" style="left:633.7px;top:829.35px" width="20.6" height="20.6" viewBox="0 0 24 24" fill="#111"><path d="M15 1H9v2h6V1zm-4 13h2V8h-2v6zm8.03-6.61l1.42-1.42c-.43-.51-.9-.99-1.41-1.41l-1.42 1.42C16.07 4.74 14.12 4 12 4c-4.97 0-9 4.03-9 9s4.02 9 9 9 9-4.03 9-9c0-2.12-.74-4.07-1.97-5.61zM12 20c-3.87 0-7-3.13-7-7s3.13-7 7-7 7 3.13 7 7-3.13 7-7 7z"/></svg>
<svg class="a" style="left:787.85px;top:830.90px" width="21.9" height="21.9" viewBox="0 0 24 24" fill="#000"><path d="M21 2H3c-1.1 0-2 .9-2 2v12c0 1.1.9 2 2 2h7l-2 3v1h8v-1l-2-3h7c1.1 0 2-.9 2-2V4c0-1.1-.9-2-2-2zm0 12H3V4h18v10z"/></svg>
<svg class="a" style="left:1337.70px;top:831.90px" width="16" height="16" viewBox="0 0 16 16"><path d="M10.97 6.7A5.1 5.1 0 1 0 6.07 11.6" fill="none" stroke="#111" stroke-width="1.75" stroke-linecap="round"/><path d="M7.04 7.44L15.4 10.6 12.3 12.7 10.2 15.9z" fill="#111"/><path d="M12.3 12.7L14.7 14.9" stroke="#111" stroke-width="1.7" stroke-linecap="round"/></svg>
<svg class="a" style="left:1396.72px;top:829.30px" width="21.5" height="21.5" viewBox="0 0 24 24" fill="#2a7af2"><path d="M14.4 6L14 4H5v17h2v-7h5.6l.4 2h7V6z"/></svg>
<svg class="a" style="left:1451.15px;top:830.10px" width="20.5" height="20.5" viewBox="0 0 24 24" fill="#000"><path d="M12 4.5C7 4.5 2.73 7.61 1 12c1.73 4.39 6 7.5 11 7.5s9.27-3.11 11-7.5c-1.73-4.39-6-7.5-11-7.5zM12 17c-2.76 0-5-2.24-5-5s2.24-5 5-5 5 2.24 5 5-2.24 5-5 5zm0-8c-1.66 0-3 1.34-3 3s1.34 3 3 3 3-1.34 3-3-1.34-3-3-3z"/></svg>
<svg class="a" style="left:513.1px;top:907.80px" width="6" height="10"><path d="M0 0l5.300 4.650L0 9.300z" fill="#777"/></svg>
<svg class="a" style="left:633.7px;top:901.25px" width="20.6" height="20.6" viewBox="0 0 24 24" fill="#111"><path d="M15 1H9v2h6V1zm-4 13h2V8h-2v6zm8.03-6.61l1.42-1.42c-.43-.51-.9-.99-1.41-1.41l-1.42 1.42C16.07 4.74 14.12 4 12 4c-4.97 0-9 4.03-9 9s4.02 9 9 9 9-4.03 9-9c0-2.12-.74-4.07-1.97-5.61zM12 20c-3.87 0-7-3.13-7-7s3.13-7 7-7 7 3.13 7 7-3.13 7-7 7z"/></svg>
<svg class="a" style="left:787.85px;top:902.80px" width="21.9" height="21.9" viewBox="0 0 24 24" fill="#000"><path d="M21 2H3c-1.1 0-2 .9-2 2v12c0 1.1.9 2 2 2h7l-2 3v1h8v-1l-2-3h7c1.1 0 2-.9 2-2V4c0-1.1-.9-2-2-2zm0 12H3V4h18v10z"/></svg>
<svg class="a" style="left:1355.70px;top:903.80px" width="16" height="16" viewBox="0 0 16 16"><path d="M10.97 6.7A5.1 5.1 0 1 0 6.07 11.6" fill="none" stroke="#111" stroke-width="1.75" stroke-linecap="round"/><path d="M7.04 7.44L15.4 10.6 12.3 12.7 10.2 15.9z" fill="#111"/><path d="M12.3 12.7L14.7 14.9" stroke="#111" stroke-width="1.7" stroke-linecap="round"/></svg>
<svg class="a" style="left:1406.92px;top:901.20px" width="21.5" height="21.5" viewBox="0 0 24 24" fill="#2a7af2"><path d="M14.4 6L14 4H5v17h2v-7h5.6l.4 2h7V6z"/></svg>
<svg class="a" style="left:1460.25px;top:902.00px" width="20.5" height="20.5" viewBox="0 0 24 24" fill="#000"><path d="M12 4.5C7 4.5 2.73 7.61 1 12c1.73 4.39 6 7.5 11 7.5s9.27-3.11 11-7.5c-1.73-4.39-6-7.5-11-7.5zM12 17c-2.76 0-5-2.24-5-5s2.24-5 5-5 5 2.24 5 5-2.24 5-5 5zm0-8c-1.66 0-3 1.34-3 3s1.34 3 3 3 3-1.34 3-3-1.34-3-3-3z"/></svg>
<div class="a" style="left:432.1px;top:864.3px;width:1px;height:11.7px;background:#333"></div>
<!-- fade on 4th card -->
<div class="a" style="left:1461px;top:235px;width:75px;height:110px;background:linear-gradient(90deg,rgba(255,255,255,0),rgba(255,255,255,.6) 4px,rgba(255,255,255,.93) 8px,rgba(255,255,255,.96) 35px,#fff 45px,#fff)"></div>
<!-- help icons -->
<svg class="a" style="left:0;top:0" width="1" height="1"><g fill="none" stroke="#e3e3e3" stroke-width="1.700"><circle cx="605.200" cy="253.200" r="8.900"/><circle cx="890.200" cy="253.200" r="8.900"/><circle cx="1159.200" cy="253.200" r="8.900"/></g></svg>
<div class="t b" style="left:601.400px;top:246.600px;font-size:13px;color:#d4d4d4">?</div>
<div class="t b" style="left:886.400px;top:246.600px;font-size:13px;color:#d4d4d4">?</div>
<div class="t b" style="left:1155.400px;top:246.600px;font-size:13px;color:#d4d4d4">?</div>
<!-- stat chevron -->
<svg class="a" style="left:1493px;top:280px" width="14" height="20"><path d="M3.100 3.300L9.900 9.600 3.100 15.900" fill="none" stroke="#111" stroke-width="2.400"/></svg>

<!-- highlights -->
<div class="hl" style="left:432.5px;top:203.4px;width:1111.5px;height:177.6px"></div>
<div class="hl" style="left:118.9px;top:642.1px;width:320px;height:242.2px"></div>
<div id="frame"></div>
</div>
</body>
</html>
